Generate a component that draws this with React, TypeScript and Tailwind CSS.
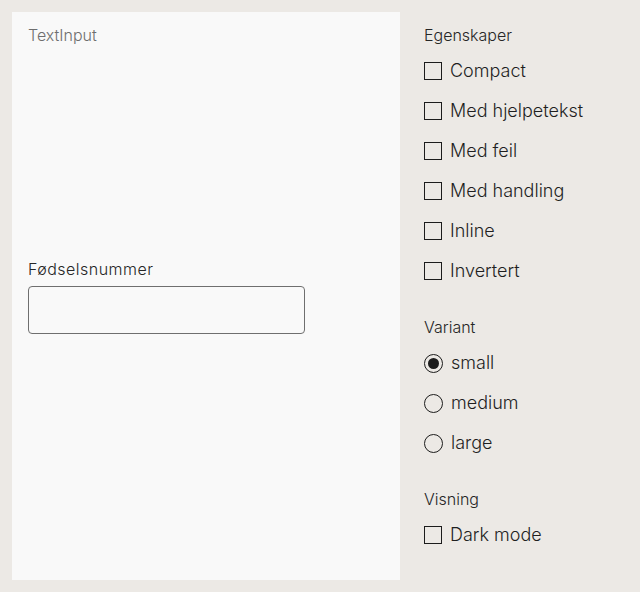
import React, { useState } from "react";

const font = { fontFamily: "Inter, 'Liberation Sans', sans-serif" };

function Checkbox({ label }: { label: string }) {
  const [c, setC] = useState(false);
  return (
    <label className="flex items-center h-10 gap-2 cursor-pointer" onClick={() => setC(!c)}>
      <span className="w-[18px] h-[18px] border-[1.5px] border-[#1c1c1c] bg-transparent shrink-0 flex items-center justify-center">
        {c && <span className="w-2.5 h-2.5 bg-[#1c1c1c]" />}
      </span>
      <span className="text-[18px] leading-6 font-light text-[#1f1f1f]">{label}</span>
    </label>
  );
}

function Radio({ label, checked, onClick }: { label: string; checked: boolean; onClick: () => void }) {
  return (
    <label className="flex items-center h-10 gap-2 cursor-pointer" onClick={onClick}>
      <span className="w-[19px] h-[19px] rounded-full border-[1.5px] border-[#1c1c1c] shrink-0 flex items-center justify-center">
        {checked && <span className="w-[11px] h-[11px] rounded-full bg-[#1c1c1c]" />}
      </span>
      <span className="text-[18px] leading-6 font-light text-[#1f1f1f]">{label}</span>
    </label>
  );
}

export default function App() {
  const [variant, setVariant] = useState("small");
  return (
    <div style={font} className="h-[592px] w-[640px] bg-[#ece9e5] p-3 flex gap-6">
      <div className="w-[388px] h-[568px] bg-[#f9f9f9] pt-[11px] px-4 flex flex-col">
        <div className="text-[16px] leading-6 font-light text-[#6e6e6e]">TextInput</div>
        <div className="mt-[210px]">
          <div className="text-[16px] leading-6 font-light text-[#262626] mb-[5px] tracking-[0.03em]">Fødselsnummer</div>
          <input
            type="text"
            className="w-[277px] h-12 border border-[#6f6f6f] rounded bg-transparent outline-none px-3"
          />
        </div>
      </div>
      <div className="flex flex-col pt-[11px]">
        <div className="text-[16px] leading-6 font-light text-[#262626] mb-1">Egenskaper</div>
        {["Compact", "Med hjelpetekst", "Med feil", "Med handling", "Inline", "Invertert"].map((l) => (
          <Checkbox key={l} label={l} />
        ))}
        <div className="text-[16px] leading-6 font-light text-[#262626] mt-6 mb-1">Variant</div>
        {["small", "medium", "large"].map((l) => (
          <Radio key={l} label={l} checked={variant === l} onClick={() => setVariant(l)} />
        ))}
        <div className="text-[16px] leading-6 font-light text-[#262626] mt-6 mb-1">Visning</div>
        <Checkbox label="Dark mode" />
      </div>
    </div>
  );
}
